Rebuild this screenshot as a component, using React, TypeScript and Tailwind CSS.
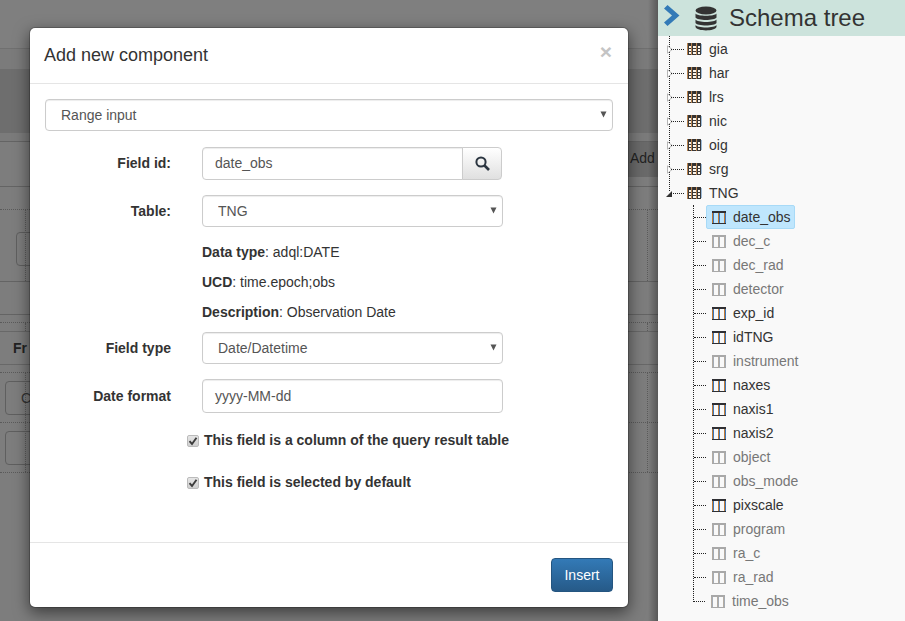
const FONT = "font-['Liberation_Sans',Arial,sans-serif]";

function TableIcon() {
  return (
    <svg width="15" height="12" viewBox="0 0 15 12" className="shrink-0" shapeRendering="crispEdges">
      <rect x="1" y="0" width="13" height="12" fill="#fdf6ec" />
      <rect x="1" y="0" width="13" height="3" fill="#33302e" />
      <path d="M1 5.5H14M1 8.5H14M1 11.5H14" stroke="#3a3532" fill="none" />
      <path d="M.5 0V12M4.5 0V12M9.5 0V12" stroke="#b9834e" fill="none" />
      <path d="M1.5 0V12M5.5 0V12M10.5 0V12" stroke="#37393d" fill="none" />
      <path d="M13.5 0V12" stroke="#37393d" fill="none" />
      <path d="M14.5 1V11" stroke="#9dbbd8" fill="none" />
    </svg>
  );
}

function ColumnIcon({ on }: { on: boolean }) {
  const top = on ? "#2f2f33" : "#a8a8a8";
  const a = on ? "#c27a34" : "#b4aca2";
  const b = on ? "#3c78bd" : "#a4acb6";
  return (
    <svg width="14" height="13" viewBox="0 0 14 13" className="shrink-0" shapeRendering="crispEdges">
      <path d="M.5 0V13M6.5 0V13M12.5 0V13" stroke={a} fill="none" />
      <path d="M1.5 0V13M7.5 0V13M13.5 0V13" stroke={b} fill="none" />
      <rect x="0" y="0" width="14" height="2" fill={top} />
      <rect x="0" y="12" width="14" height="1" fill={top} />
    </svg>
  );
}

function Caret({ open }: { open?: boolean }) {
  return open ? (
    <svg width="6" height="6" viewBox="0 0 6 6" className="absolute left-[8px] top-[10px]">
      <path d="M6 0V6H0Z" fill="#333" />
    </svg>
  ) : (
    <svg width="6" height="9" viewBox="0 0 6 9" className="absolute left-[9px] top-[8px]">
      <path d="M.5.8V8.2L5.2 4.5Z" fill="#fff" stroke="#b5b5b5" />
    </svg>
  );
}

function TableRow({ name, open }: { name: string; open?: boolean }) {
  return (
    <div className="relative flex h-[24px] items-center pl-[29px]">
      <Caret open={open} />
      <span className="absolute left-[13px] top-[12px] w-[13px] border-t border-dotted border-[#222]" />
      <TableIcon />
      <span className="ml-[7px] text-[14px] text-[#333]">{name}</span>
    </div>
  );
}

function ColumnRow({ name, on, selected }: { name: string; on?: boolean; selected?: boolean }) {
  return (
    <div className="relative flex h-[24px] items-center pl-[13px]">
      <span className="absolute left-0 top-[12px] w-[12px] border-t border-dotted border-[#222]" />
      <div
        className={
          selected
            ? "-ml-px flex h-[24px] items-center rounded-[2px] border border-[#a8daf7] bg-[#bfe6fd] pl-[5px] pr-[3px]"
            : "-ml-px flex h-[24px] items-center border border-transparent pl-[5px]"
        }
      >
        <ColumnIcon on={!!on || !!selected} />
        <span className={`ml-[7px] text-[14px] ${on || selected ? "text-[#333]" : "text-[#777]"}`}>{name}</span>
      </div>
    </div>
  );
}

function Line({ h, cls }: { h: string; cls: string }) {
  return <div className={`${h} ${cls}`} />;
}

function DottedRow({ h, children }: { h: string; children?: React.ReactNode }) {
  return (
    <div className={`flex ${h} border-t border-dotted border-[#5a5a5a]`}>
      <div className="w-[26px] shrink-0 border-r border-dotted border-[#5a5a5a]">{children}</div>
      <div className="flex-1" />
      <div className="w-[11px] shrink-0 border-l border-dotted border-[#5a5a5a]" />
    </div>
  );
}

function Background() {
  return (
    <div className="relative min-w-0 flex-1 bg-[#7d7d7d]">
      <Line h="h-[49px]" cls="bg-[#7f7f7f] border-b border-[#707070]" />
      <Line h="h-[20px]" cls="bg-[#7b7b7b]" />
      <Line h="h-[64px]" cls="bg-[#6e6e6e]" />
      <Line h="h-[8px]" cls="bg-[#7b7b7b]" />
      <div className="flex h-[46px] justify-end border-y border-[#646464]">
        <div className="h-[35px] w-[30px] bg-[#6a6a6a] pl-[2px] pt-[6px] text-[14px] text-[#222]">Add</div>
      </div>
      <div className="h-[22px]" />
      <DottedRow h="h-[72px]">
        <div className="ml-[16px] mt-[22px] h-[34px] w-[20px] rounded-l border border-[#5f5f5f]" />
      </DottedRow>
      <div className="h-[34px] border-y border-[#646464]" />
      <div className="h-[7px]" />
      <DottedRow h="h-[9px]" />
      <div className="flex h-[34px] items-center border-y border-[#686868] pl-[13px] text-[14px] font-bold text-[#222]">Fr</div>
      <div className="h-[7px]" />
      <DottedRow h="h-[50px]">
        <div className="ml-[5px] mt-[8px] h-[34px] w-[30px] rounded-l border border-[#5f5f5f] pl-[15px] pt-[6px] text-[14px] text-[#333]">C</div>
      </DottedRow>
      <DottedRow h="h-[50px]">
        <div className="ml-[5px] mt-[8px] h-[34px] w-[30px] rounded-l border border-[#5f5f5f]" />
      </DottedRow>
      <div className="border-t border-dotted border-[#5a5a5a]" />
      <div className="absolute inset-y-0 right-0 w-[10px] bg-gradient-to-r from-transparent to-black/30" />
    </div>
  );
}

function Field({ label, h, children }: { label: string; h: string; children: React.ReactNode }) {
  return (
    <div className={`flex ${h} items-center`}>
      <div className="w-[126px] text-right text-[14px] font-bold text-[#333]">{label}</div>
      <div className="ml-[31px]">{children}</div>
    </div>
  );
}

function Select({ value, w }: { value: string; w: string }) {
  return (
    <div className={`relative ${w}`}>
      <select
        defaultValue={value}
        className="block h-[32px] w-full appearance-none rounded-[4px] border border-[#ccc] bg-white pl-[15px] text-[14px] text-[#555] shadow-[inset_0_1px_1px_rgba(0,0,0,0.075)]"
      >
        <option>{value}</option>
      </select>
      <svg width="7" height="7" viewBox="0 0 7 7" className="absolute right-[6px] top-[12px]">
        <path d="M.5 .5H6.5L3.5 6.5Z" fill="#555" />
      </svg>
    </div>
  );
}

function Check({ label }: { label: string }) {
  return (
    <div className="flex items-center pl-[142px]">
      <span className="flex h-[12px] w-[12px] items-center justify-center rounded-[2px] border border-[#bbb] bg-gradient-to-b from-[#e6e6e6] to-[#cfcfcf]">
        <svg width="10" height="10" viewBox="0 0 10 10">
          <path d="M1.5 5.2L4 8L8.5 1.8" fill="none" stroke="#3c3c3c" strokeWidth="1.9" />
        </svg>
      </span>
      <span className="ml-[5px] text-[14px] font-bold text-[#333]">{label}</span>
    </div>
  );
}

function Modal() {
  return (
    <div className="absolute left-[29px] top-[27px] flex h-[581px] w-[600px] flex-col rounded-[6px] border border-black/20 bg-white bg-clip-padding shadow-[0_5px_15px_rgba(0,0,0,0.5)]">
      <div className="flex h-[56px] shrink-0 items-center justify-between border-b border-[#e5e5e5] pl-[14px] pr-[16px]">
        <h4 className="text-[18px] text-[#333]">Add new component</h4>
        <span className="-mt-[9px] text-[21px] font-bold leading-none text-[#c4c4c4]">×</span>
      </div>
      <div className="flex-1 pl-[15px] pt-[15px]">
        <Select value="Range input" w="w-[568px]" />
        <div className="mt-[16px]">
          <Field label="Field id:" h="h-[33px]">
            <div className="flex">
              <div className="flex h-[33px] w-[261px] items-center rounded-l-[4px] border border-[#ccc] pl-[12px] text-[14px] text-[#555] shadow-[inset_0_1px_1px_rgba(0,0,0,0.075)]">date_obs</div>
              <div className="-ml-px flex h-[33px] w-[40px] items-center justify-center rounded-r-[4px] border border-[#ccc] bg-gradient-to-b from-white to-[#e0e0e0]">
                <svg width="15" height="15" viewBox="0 0 15 15" fill="none" stroke="#2b3540">
                  <circle cx="6" cy="6" r="4.6" strokeWidth="2" />
                  <path d="M9.5 9.5L14 14" strokeWidth="2.6" />
                </svg>
              </div>
            </div>
          </Field>
        </div>
        <div className="mt-[15px]">
          <Field label="Table:" h="h-[32px]"><Select value="TNG" w="w-[301px]" /></Field>
        </div>
        <div className="ml-[157px] mt-[10px] text-[14px] leading-[20px] text-[#333]">
          <p className="pt-[5px]"><b>Data type</b>: adql:DATE</p>
          <p className="pt-[10px]"><b>UCD</b>: time.epoch;obs</p>
          <p className="pt-[10px]"><b>Description</b>: Observation Date</p>
        </div>
        <div className="mt-[10px]">
          <Field label="Field type" h="h-[32px]"><Select value="Date/Datetime" w="w-[301px]" /></Field>
        </div>
        <div className="mt-[15px]">
          <Field label="Date format" h="h-[34px]">
            <div className="flex h-[34px] w-[301px] items-center rounded-[4px] border border-[#ccc] pl-[12px] text-[14px] text-[#555] shadow-[inset_0_1px_1px_rgba(0,0,0,0.075)]">yyyy-MM-dd</div>
          </Field>
        </div>
        <div className="mt-[17px] flex flex-col gap-[21px]">
          <Check label="This field is a column of the query result table" />
          <Check label="This field is selected by default" />
        </div>
      </div>
      <div className="flex h-[65px] shrink-0 items-start justify-end border-t border-[#e5e5e5] pr-[15px] pt-[15px]">
        <button className="h-[34px] w-[62px] rounded-[4px] border border-[#245580] bg-gradient-to-b from-[#337ab7] to-[#265a88] text-[14px] text-white">Insert</button>
      </div>
    </div>
  );
}

const TABLES = ["gia", "har", "lrs", "nic", "oig", "srg"];
const COLUMNS: [string, boolean][] = [
  ["dec_c", false], ["dec_rad", false], ["detector", false], ["exp_id", true], ["idTNG", true],
  ["instrument", false], ["naxes", true], ["naxis1", true], ["naxis2", true], ["object", false],
  ["obs_mode", false], ["pixscale", true], ["program", false], ["ra_c", false], ["ra_rad", false],
];

function Sidebar() {
  return (
    <div className="h-full w-[247px] shrink-0 overflow-hidden bg-[#f9f9f9]">
      <div className="flex h-[36px] items-center bg-[#cce3dc]">
        <svg width="16" height="21" viewBox="0 0 16 21" className="-mt-[5px] ml-[6px]">
          <path d="M0 3.5L3.5 0L15.5 10.5L3.5 21L0 17.5L8 10.5Z" fill="#337ab7" />
        </svg>
        <svg width="22" height="25" viewBox="0 0 22 25" className="ml-[15px]" fill="#333">
          <ellipse cx="11" cy="4.5" rx="10.5" ry="4" />
          <path d="M.5 7.5C2 10.5 20 10.5 21.5 7.5V11.5C20 14.8 2 14.8.5 11.5Z" />
          <path d="M.5 13.5C2 16.8 20 16.8 21.5 13.5V17C20 20.3 2 20.3.5 17Z" />
          <path d="M.5 19C2 22.3 20 22.3 21.5 19V21C20 25.5 2 25.5.5 21Z" />
        </svg>
        <span className="ml-[12px] text-[24px] text-[#333]">Schema tree</span>
      </div>
      <div className="relative pt-[1px]">
        <span className="absolute left-[11px] top-0 h-[155px] border-l border-dotted border-[#222]" />
        {TABLES.map((t) => (
          <TableRow key={t} name={t} />
        ))}
        <TableRow name="TNG" open />
        <div className="ml-[35px] border-l border-dotted border-[#222]">
          <ColumnRow name="date_obs" selected />
          {COLUMNS.map(([n, on]) => (
            <ColumnRow key={n} name={n} on={on} />
          ))}
        </div>
        <div className="relative ml-[35px]">
          <span className="absolute left-0 top-0 h-[13px] border-l border-dotted border-[#222]" />
          <ColumnRow name="time_obs" />
        </div>
      </div>
    </div>
  );
}

export default function App() {
  return (
    <div className={`relative flex h-[621px] w-[905px] overflow-hidden ${FONT}`}>
      <Background />
      <Sidebar />
      <Modal />
    </div>
  );
}
